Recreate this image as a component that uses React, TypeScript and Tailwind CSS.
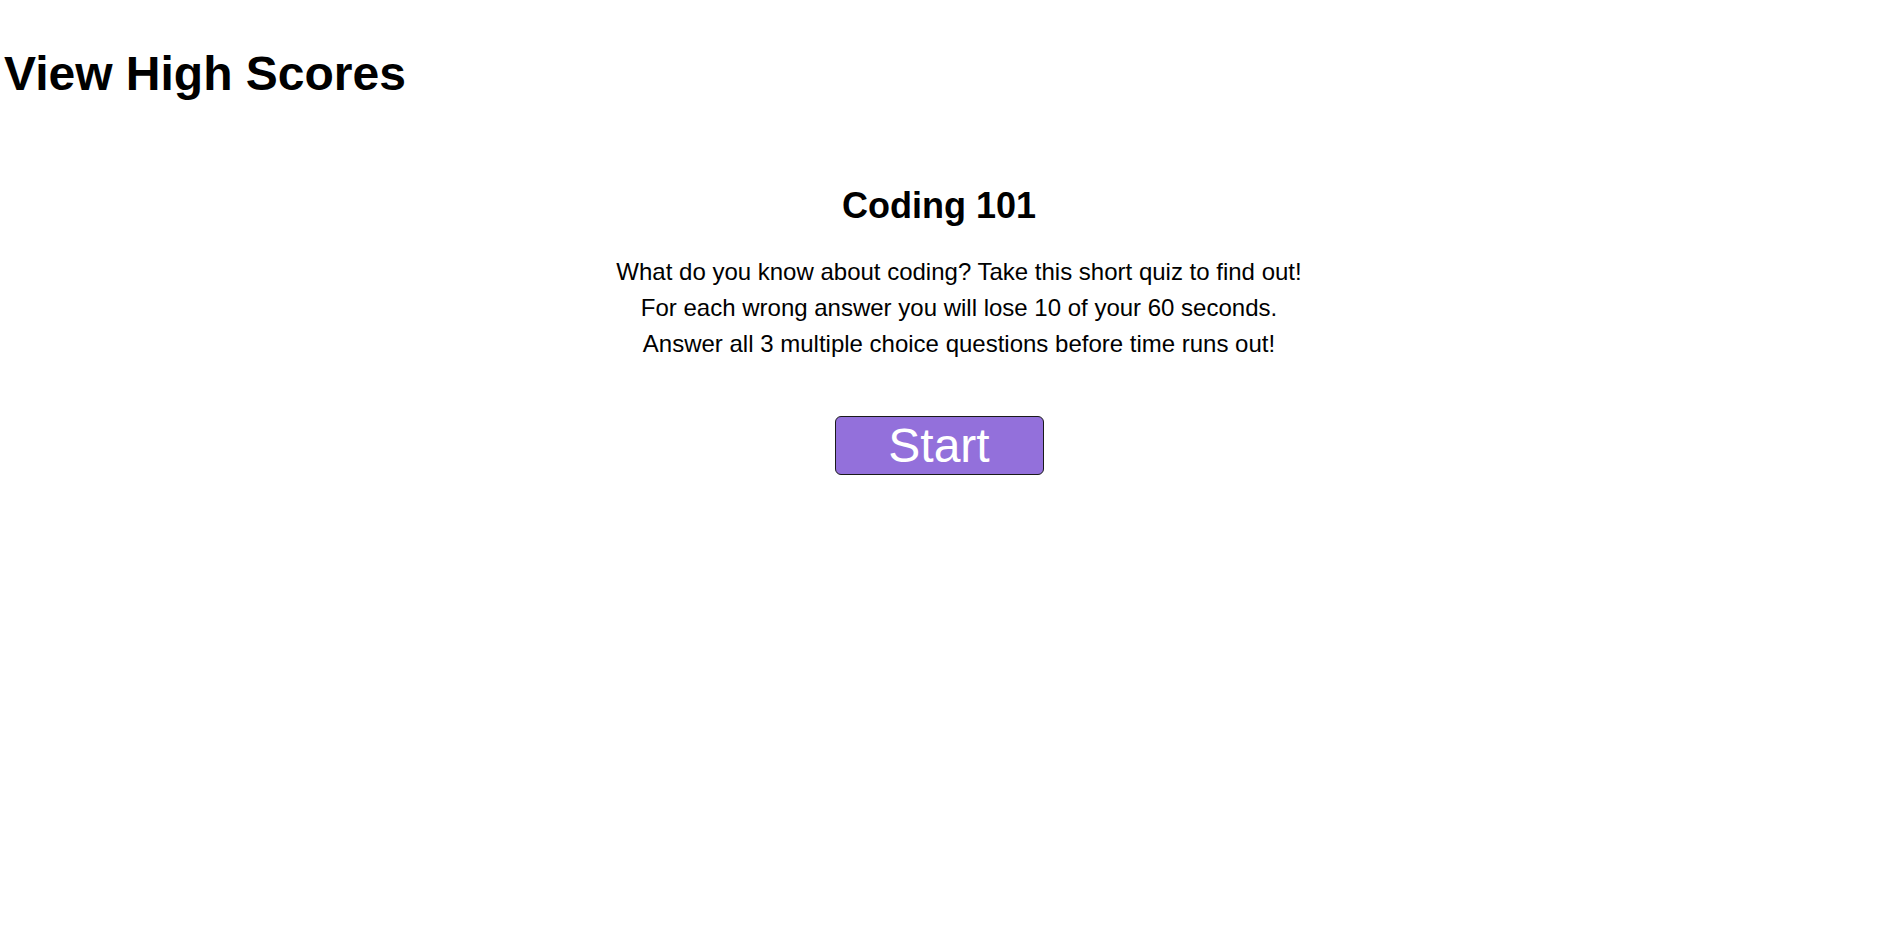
export default function App() {
    return (
        <div className="min-h-screen bg-white text-black font-['Liberation_Sans',Arial,sans-serif]">
            <header className="pt-[50px] pl-[4px]">
                <h1 className="text-[48px] leading-none font-bold">View High Scores</h1>
            </header>

            <main className="mt-[90px] pr-[4px] flex flex-col items-center">
                <h2 className="text-[36px] leading-none font-bold">Coding 101</h2>
                <div className="mt-[30px] pl-[40px] text-center text-[24px] leading-[36px]">
                    <p>What do you know about coding? Take this short quiz to find out!</p>
                    <p>For each wrong answer you will lose 10 of your 60 seconds.</p>
                    <p>Answer all 3 multiple choice questions before time runs out!</p>
                </div>
                <button className="mt-[54px] w-[209px] h-[59px] bg-[#9370db] text-white text-[48px] leading-none border border-[#1a1a1a] rounded-[6px]">
                    Start
                </button>
            </main>
        </div>
    )
}
